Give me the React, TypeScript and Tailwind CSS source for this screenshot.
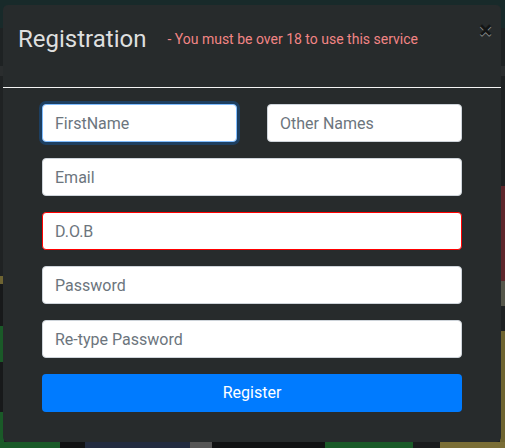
import React from "react";

const font = { fontFamily: "Roboto, 'Liberation Sans', sans-serif" };

export default function App() {
  return (
    <div className="relative w-[505px] h-[448px] overflow-hidden bg-[#1c1f20]" style={font}>
      {/* backdrop page */}
      <div className="flex flex-col w-full h-full">
        <div className="h-[28px] bg-[#182a2a]" />
        <div className="h-[38px] bg-[#1e2223]" />
        <div className="h-[10px] bg-[#2a2d2e]" />
        <div className="flex flex-1">
          <div className="flex flex-col w-[4px]">
            <div className="h-[200px] bg-[#1f2223]" />
            <div className="h-[8px] bg-[#6e6432]" />
            <div className="h-[42px] bg-[#17191a]" />
            <div className="h-[36px] bg-[#1a5a28]" />
            <div className="flex-1 bg-[#17191a]" />
            <div className="h-[30px] bg-[#1a5a28]" />
          </div>
          <div className="flex-1" />
          <div className="flex flex-col w-[5px]">
            <div className="h-[110px] bg-[#1e2122]" />
            <div className="h-[95px] bg-[#5e262b]" />
            <div className="h-[25px] bg-[#55564a]" />
            <div className="h-[25px] bg-[#1e2122]" />
            <div className="flex-1 bg-[#6e6430]" />
          </div>
        </div>
        <div className="flex h-[6px]">
          <div className="w-[60px] bg-[#1a5a28]" />
          <div className="w-[25px] bg-[#111213]" />
          <div className="w-[105px] bg-[#232c40]" />
          <div className="w-[22px] bg-[#555]" />
          <div className="w-[113px] bg-[#111213]" />
          <div className="w-[88px] bg-[#1a5a28]" />
          <div className="w-[27px] bg-[#1a1c1d]" />
          <div className="flex-1 bg-[#7a6e36]" />
        </div>
      </div>

      {/* modal */}
      <div className="absolute left-[3px] top-[5px] w-[498px] h-[437px] rounded-[5px] bg-[#272b2c] flex flex-col">
        <div className="h-[83px] border-b border-[#f4f4f4] flex items-start pl-[15px] pr-[9px] pt-[20px]">
          <h4 className="text-[24px] leading-[29px] text-[#dedfdf] font-normal">Registration</h4>
          <span className="ml-[21px] mt-[4px] text-[14px] leading-[20px] text-[#f28585]">
            - You must be over 18 to use this service
          </span>
          <button
            className="ml-auto mt-[-7px] text-[24px] leading-none font-bold text-black opacity-50"
            style={{ textShadow: "0 1px 0 #fff" }}
          >
            ×
          </button>
        </div>
        <div className="flex flex-col gap-[16px] px-[39px] pt-[16px]">
          <div className="grid grid-cols-2 gap-[30px]">
            <input
              className="h-[38px] rounded-[4px] bg-white border border-[#80bdff] px-[12px] text-[16px] text-[#495057] placeholder:text-[#6c757d] outline-none shadow-[0_0_0_3px_rgba(0,123,255,0.25)]"
              placeholder="FirstName"
            />
            <input
              className="h-[38px] rounded-[4px] bg-white border border-[#ced4da] px-[12px] text-[16px] text-[#495057] placeholder:text-[#6c757d] outline-none"
              placeholder="Other Names"
            />
          </div>
          <input
            className="h-[38px] rounded-[4px] bg-white border border-[#ced4da] px-[12px] text-[16px] text-[#495057] placeholder:text-[#6c757d] outline-none"
            placeholder="Email"
          />
          <input
            className="h-[38px] rounded-[4px] bg-white border border-[#ff0000] px-[12px] text-[16px] text-[#495057] placeholder:text-[#6c757d] outline-none"
            placeholder="D.O.B"
          />
          <input
            type="password"
            className="h-[38px] rounded-[4px] bg-white border border-[#ced4da] px-[12px] text-[16px] text-[#495057] placeholder:text-[#6c757d] outline-none"
            placeholder="Password"
          />
          <input
            type="password"
            className="h-[38px] rounded-[4px] bg-white border border-[#ced4da] px-[12px] text-[16px] text-[#495057] placeholder:text-[#6c757d] outline-none"
            placeholder="Re-type Password"
          />
          <button className="h-[38px] rounded-[4px] bg-[#007bff] text-white text-[16px]">Register</button>
        </div>
      </div>
    </div>
  );
}
